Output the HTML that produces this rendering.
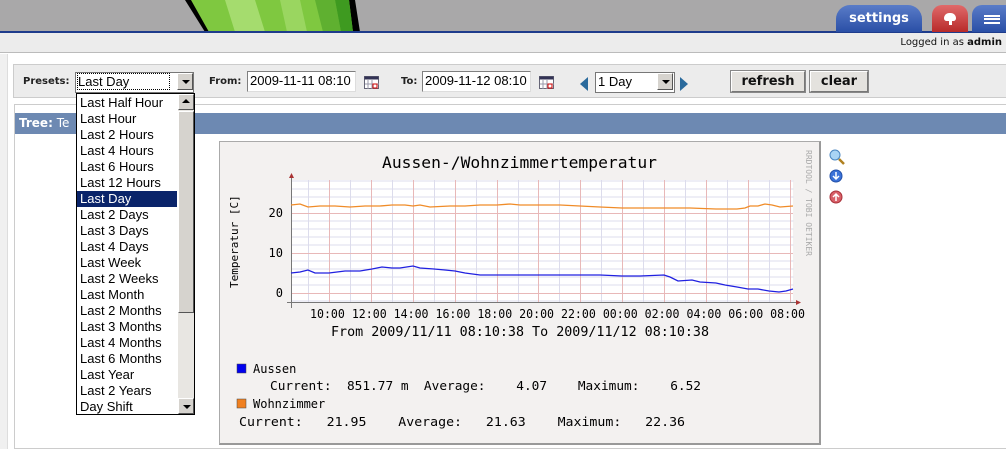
<!DOCTYPE html>
<html><head><meta charset="utf-8"><style>
*{margin:0;padding:0;box-sizing:border-box}
body{width:1006px;height:449px;overflow:hidden;background:#fff;position:relative;font-family:"Liberation Sans",sans-serif}
.abs{position:absolute}
.inp{position:absolute;background:#fff;border:1px solid #7f7f7f;border-right-color:#ddd;border-bottom-color:#ddd;font-size:13px;padding-left:2px;line-height:18px;height:21px}
.lbl{position:absolute;font-family:"DejaVu Sans",sans-serif;font-weight:bold;font-size:10px;color:#222}
.btn{position:absolute;height:21px;background:#e4e2de;border:1px solid #777;border-left-color:#fff;border-top-color:#fff;outline:1px solid #888;font-family:"DejaVu Sans",sans-serif;font-weight:bold;font-size:13px;text-align:center;line-height:19px;color:#111}
.dd{position:absolute;width:16px;height:17px;background:#d6d3ce;border:1px solid #fff;border-right-color:#555;border-bottom-color:#555}
.dd:after{content:"";position:absolute;left:4px;top:6px;border:4px solid transparent;border-top:4px solid #000;border-bottom:0}
.list div{height:16px;line-height:16px;font-size:13px;padding-left:3px;color:#000}
svg text{white-space:pre}
</style></head><body>
<div class="abs" style="left:0;top:0;width:1006px;height:32px;background:#a9a8a9"></div>
<svg class="abs" style="left:185px;top:0" width="180" height="32">
<polygon points="0,0 170,0 175,32 20,32" fill="#000"/>
<polygon points="6,0 164,0 168,32 24,32" fill="#7fc840"/>
<polygon points="40,0 70,0 80,32 50,32" fill="#a5dc6e"/>
<polygon points="95,0 115,0 122,32 102,32" fill="#9ad660"/>
<polygon points="130,0 150,0 156,32 138,32" fill="#5fb030"/>
<polygon points="150,0 164,0 168,32 156,32" fill="#3e9a20"/>
</svg>
<div class="abs" style="left:0;top:31px;width:1006px;height:2px;background:#1e3c8c"></div>
<div class="abs" style="left:836px;top:5px;width:86px;height:27px;background:linear-gradient(#5a7cc8,#2a4fa6);border-radius:14px 14px 0 0;color:#fff;font-family:'DejaVu Sans',sans-serif;font-weight:bold;font-size:13px;text-align:center;line-height:28px">settings</div>
<div class="abs" style="left:932px;top:5px;width:36px;height:27px;background:linear-gradient(#e06a6a,#b82a2a);border-radius:10px 10px 0 0"><div style="position:absolute;left:12px;top:8px;width:12px;height:8px;background:#fff;border-radius:6px 6px 3px 3px"></div><div style="position:absolute;left:17px;top:15px;width:3px;height:5px;background:#fff"></div></div>
<div class="abs" style="left:972px;top:5px;width:40px;height:27px;background:linear-gradient(#5a7cc8,#2a4fa6);border-radius:10px 0 0 0"><div style="position:absolute;left:12px;top:10px;width:16px;height:9px;border-top:2px solid #fff;border-bottom:2px solid #fff"></div><div style="position:absolute;left:12px;top:13px;width:16px;height:3px;border-top:2px solid #fff"></div></div>
<div class="abs" style="left:0;top:33px;width:1006px;height:20px;background:#ececec;border-bottom:1px solid #bbb"></div>
<div class="abs" style="right:4px;top:37px;font-family:'DejaVu Sans',sans-serif;font-size:10px;color:#111">Logged in as <b>admin</b></div>
<div class="abs" style="left:0;top:54px;width:8px;height:395px;background:#f0f0f0;border-right:1px solid #ddd"></div>
<div class="abs" style="left:13px;top:64px;width:995px;height:34px;background:#ececec;border:1px solid #ccc"></div>
<div class="lbl" style="left:23px;top:76px">Presets:</div>
<div class="inp" style="left:75px;top:72px;width:119px;border-color:#777"><span style="outline:1px dotted #000">Last Day&nbsp;&nbsp;&nbsp;&nbsp;&nbsp;&nbsp;&nbsp;&nbsp;&nbsp;&nbsp;&nbsp;</span></div>
<div class="dd" style="left:177px;top:73px"></div>
<div class="lbl" style="left:209px;top:76px">From:</div>
<div class="inp" style="left:247px;top:71px;width:109px">2009-11-11 08:10</div>
<svg class="abs" style="left:364px;top:76px" width="16" height="14"><rect x="0.5" y="0.5" width="14" height="12" fill="#fff" stroke="#667"/><rect x="0.5" y="0.5" width="14" height="3" fill="#335"/><path d="M4 4v9M8 4v9M1 8h14" stroke="#99a"/><rect x="9" y="8" width="4" height="4" fill="none" stroke="#c00"/></svg>
<div class="lbl" style="left:401px;top:76px">To:</div>
<div class="inp" style="left:422px;top:71px;width:109px">2009-11-12 08:10</div>
<svg class="abs" style="left:539px;top:76px" width="16" height="14"><rect x="0.5" y="0.5" width="14" height="12" fill="#fff" stroke="#667"/><rect x="0.5" y="0.5" width="14" height="3" fill="#335"/><path d="M4 4v9M8 4v9M1 8h14" stroke="#99a"/><rect x="9" y="8" width="4" height="4" fill="none" stroke="#c00"/></svg>
<svg class="abs" style="left:579px;top:77px" width="10" height="14"><polygon points="9,0 9,14 1,7" fill="#2a6a9c"/></svg>
<div class="inp" style="left:595px;top:72px;width:80px;border-color:#777">1 Day</div>
<div class="dd" style="left:657px;top:73px"></div>
<svg class="abs" style="left:679px;top:77px" width="10" height="14"><polygon points="1,0 1,14 9,7" fill="#2a6a9c"/></svg>
<div class="btn" style="left:731px;top:71px;width:74px">refresh</div>
<div class="btn" style="left:810px;top:71px;width:58px">clear</div>
<div class="abs" style="left:14px;top:104px;width:994px;height:345px;border:1px solid #ccc;border-right:0"></div>
<div class="abs" style="left:15px;top:113px;width:991px;height:21px;background:#6d89b2;color:#fff;font-family:'DejaVu Sans',sans-serif;font-size:12px;line-height:21px;padding-left:4px"><b>Tree:</b> Te</div>
<div class="abs" style="left:219px;top:141px;width:602px;height:304px;background:#f3f1f0;border:1px solid #aaa;border-right:2px solid #999;border-bottom:2px solid #999"></div>
<svg class="abs" style="left:0;top:0" width="1006" height="449" font-family="DejaVu Sans Mono,Liberation Mono,monospace" xml:space="preserve">
<text x="382" y="168" font-size="16" textLength="275" lengthAdjust="spacingAndGlyphs" fill="#000">Aussen-/Wohnzimmertemperatur</text>
<text transform="translate(238,288) rotate(-90)" font-size="11" fill="#000">Temperatur [C]</text>
<text transform="translate(806,150) rotate(90)" font-size="8" fill="#aaa">RRDTOOL / TOBI OETIKER</text>
<rect x="291" y="180" width="502" height="122" fill="#fff"/>
<g stroke="#dcdcec" stroke-width="1">
<path d="M291.5 285h502M291.5 277h502M291.5 269h502M291.5 261h502M291.5 245h502M291.5 237h502M291.5 229h502M291.5 221h502M291.5 197h502M291.5 189h502M291.5 181h502M291.5 301h502"/>
<path d="M308.5 180v122M350.5 180v122M392.5 180v122M434.5 180v122M476.5 180v122M518.5 180v122M559.5 180v122M601.5 180v122M643.5 180v122M685.5 180v122M727.5 180v122M769.5 180v122"/>
</g>
<g stroke="#e8b8b8" stroke-width="1">
<path d="M291 293.5h502M291 253.5h502M291 213.5h502"/>
<path d="M329.5 180v122M371.5 180v122M413.5 180v122M455.5 180v122M497.5 180v122M538.5 180v122M580.5 180v122M622.5 180v122M664.5 180v122M706.5 180v122M748.5 180v122M790.5 180v122"/>
</g>
<path d="M291.5 308V176M287 302.5h511" stroke="#777" fill="none"/>
<polygon points="289,178 294,178 291.5,173" fill="#a33"/>
<polygon points="796,300 796,305 801,302.5" fill="#a33"/>
<polyline fill="none" stroke="#f08c28" stroke-width="1.3" points="291,205 300,204 308,207 320,206 335,206 350,207 365,206 380,206 392,205 405,205 413,206 420,205 430,207 450,206 465,206 480,205 497,205 510,204 520,205 538,205 560,205 580,206 600,207 622,208 640,208 664,208 690,208 716,209 737,209 745,208 750,206 758,206 765,204 772,205 780,207 793,206"/>
<polyline fill="none" stroke="#2020e0" stroke-width="1.3" points="291,273 300,272 308,270 315,273 329,273 345,271 360,271 372,269 382,267 392,268 400,268 413,266 420,268 434,269 445,270 455,271 465,273 480,275 497,275 520,275 538,275 560,275 580,275 600,275 622,276 640,276 664,275 670,277 678,281 692,280 700,282 716,283 725,285 737,287 748,289 758,289 769,291 779,292 786,291 793,289"/>
<g font-size="12" fill="#000">
<text x="283" y="217" text-anchor="end">20</text>
<text x="283" y="257" text-anchor="end">10</text>
<text x="283" y="297" text-anchor="end">0</text>
<text x="310" y="318" textLength="495" lengthAdjust="spacingAndGlyphs">10:00 12:00 14:00 16:00 18:00 20:00 22:00 00:00 02:00 04:00 06:00 08:00</text>
<text x="331" y="336" font-size="13" textLength="378" lengthAdjust="spacingAndGlyphs">From 2009/11/11 08:10:38 To 2009/11/12 08:10:38</text>
<rect x="237" y="364" width="9" height="9" fill="#0000ee" stroke="#444" stroke-width=".5"/>
<text x="253" y="373">Aussen</text>
<text x="270" y="390" textLength="431" lengthAdjust="spacingAndGlyphs">Current:  851.77 m  Average:    4.07    Maximum:    6.52</text>
<rect x="237" y="399" width="9" height="9" fill="#f08020" stroke="#444" stroke-width=".5"/>
<text x="253" y="408">Wohnzimmer</text>
<text x="239" y="426" textLength="446" lengthAdjust="spacingAndGlyphs">Current:   21.95    Average:   21.63    Maximum:   22.36</text>
</g>
<circle cx="835" cy="155" r="5" fill="#a9d4f4" stroke="#4a86c0"/><path d="M839 159l5 5" stroke="#b08020" stroke-width="2.5"/>
<circle cx="836" cy="176" r="6" fill="#3b72d8" stroke="#2250a8"/><path d="M836 172v7M833 176l3 3 3-3" stroke="#fff" stroke-width="1.5" fill="none"/>
<circle cx="836" cy="197" r="6" fill="#d86068" stroke="#a83038"/><path d="M836 201v-7M833 197l3-3 3 3" stroke="#fff" stroke-width="1.5" fill="none"/>
</svg>
<div class="abs list" style="left:76px;top:93px;width:119px;height:322px;background:#fff;border:1px solid #000;padding-top:1px">
<div>Last Half Hour</div><div>Last Hour</div><div>Last 2 Hours</div><div>Last 4 Hours</div><div>Last 6 Hours</div><div>Last 12 Hours</div><div style="background:#0a246a;color:#fff;margin-right:17px">Last Day</div><div>Last 2 Days</div><div>Last 3 Days</div><div>Last 4 Days</div><div>Last Week</div><div>Last 2 Weeks</div><div>Last Month</div><div>Last 2 Months</div><div>Last 3 Months</div><div>Last 4 Months</div><div>Last 6 Months</div><div>Last Year</div><div>Last 2 Years</div><div>Day Shift</div>
</div>
<div class="abs" style="left:178px;top:94px;width:16px;height:320px;background:#e8e6e2"></div>
<div class="abs" style="left:178px;top:111px;width:16px;height:202px;background:#d6d3ce;border:1px solid #fff;border-right-color:#555;border-bottom-color:#555"></div>
<div class="abs" style="left:178px;top:94px;width:16px;height:16px;background:#d6d3ce;border:1px solid #fff;border-right-color:#555;border-bottom-color:#555"></div>
<div class="abs" style="left:182px;top:99px;border:4px solid transparent;border-bottom:4px solid #000;border-top:0;width:0;height:0"></div>
<div class="dd" style="left:178px;top:398px;height:16px"></div>
</body></html>
